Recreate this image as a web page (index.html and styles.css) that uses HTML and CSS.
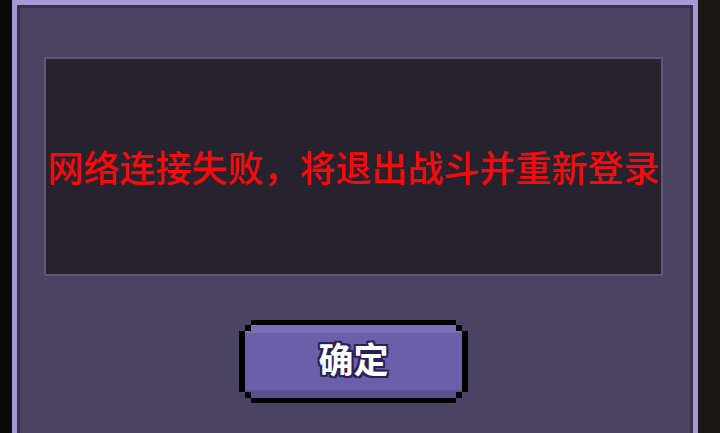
FILE: index.html
```html
<!DOCTYPE html>
<html lang="zh-CN">
<head>
  <meta charset="UTF-8" />
  <title>提示</title>
  <link rel="stylesheet" href="styles.css">
</head>
<body>
  <div class="dialog">
    <div class="message-box">
      <p class="message">网络连接失败，将退出战斗并重新登录</p>
    </div>
    <div class="btn" id="okBtn">
      <div class="btn-face">确定</div>
    </div>
  </div>
</body>
</html>
```

FILE: styles.css
```css
* {
  margin: 0;
  padding: 0;
  box-sizing: border-box;
}

html, body {
  height: 100%;
  overflow: hidden;
}

body {
  background: linear-gradient(to right, #0a0807 0, #0a0807 12px, #1b1713 698px);
  font-family: "Noto Sans CJK SC", "Noto Sans", sans-serif;
}

.dialog {
  margin-left: 12px;
  width: 686px;
  height: 100%;
  background: #4a4462;
  border: 5px solid #a897d6;
  border-bottom: none;
  box-shadow: inset 3px 3px 0 #37334a, inset -3px 0 0 #37334a;
  padding: 52px 30px 0 27px;
  display: flex;
  flex-direction: column;
  align-items: center;
}

.message-box {
  width: 619px;
  height: 219px;
  flex-shrink: 0;
  background: #26222e;
  border: 2px solid #5c5772;
  display: flex;
  align-items: center;
  justify-content: center;
  padding-bottom: 2px;
}

.message {
  color: #f40b0b;
  font-size: 36px;
  font-weight: 500;
  line-height: 1;
  white-space: nowrap;
}

.btn {
  margin-top: 44px;
  width: 229px;
  height: 83px;
  flex-shrink: 0;
  background: #000;
  padding: 5px 6px;
  cursor: pointer;
  clip-path: polygon(12px 0, 217px 0, 217px 5px, 223px 5px, 223px 11px, 229px 11px,
    229px 72px, 223px 72px, 223px 78px, 217px 78px, 217px 83px, 12px 83px,
    12px 78px, 6px 78px, 6px 72px, 0 72px, 0 11px, 6px 11px, 6px 5px, 12px 5px);
}

.btn-face {
  height: 100%;
  background: linear-gradient(to bottom, #7a70b8 0, #7a70b8 8px, #6a5fa8 8px, #6a5fa8 calc(100% - 8px), #5a5092 calc(100% - 8px));
  clip-path: polygon(6px 0, calc(100% - 6px) 0, calc(100% - 6px) 6px, 100% 6px,
    100% calc(100% - 6px), calc(100% - 6px) calc(100% - 6px), calc(100% - 6px) 100%,
    6px 100%, 6px calc(100% - 6px), 0 calc(100% - 6px), 0 6px, 6px 6px);
  display: flex;
  align-items: center;
  justify-content: center;
  padding-bottom: 8px;
  color: #fff;
  font-size: 35px;
  font-weight: 700;
  text-shadow: 2px 0 0 #2b1f55, -2px 0 0 #2b1f55, 0 2px 0 #2b1f55, 0 -2px 0 #2b1f55,
    2px 2px 0 #2b1f55, -2px -2px 0 #2b1f55, 2px -2px 0 #2b1f55, -2px 2px 0 #2b1f55;
}
```
